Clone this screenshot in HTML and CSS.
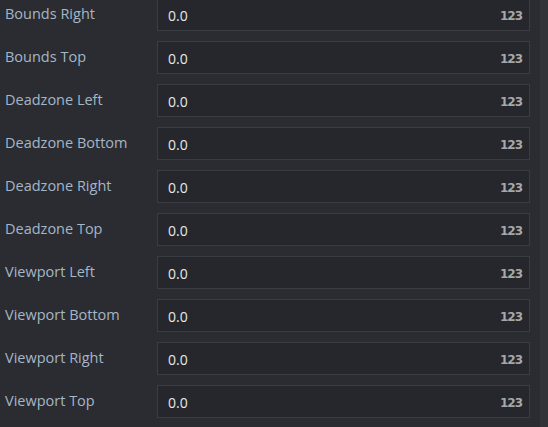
FILE: index.html
```html
<!DOCTYPE html>
<html lang="en">
<head>
  <meta charset="UTF-8">
  <title>Camera Properties</title>
  <link rel="stylesheet" href="styles.css">
</head>
<body>
  <div class="panel">
    <div class="props">
      <div class="prop">
        <label class="prop-label">Bounds Right</label>
        <div class="prop-field"><span class="prop-value">0.0</span><span class="prop-type">123</span></div>
      </div>
      <div class="prop">
        <label class="prop-label">Bounds Top</label>
        <div class="prop-field"><span class="prop-value">0.0</span><span class="prop-type">123</span></div>
      </div>
      <div class="prop">
        <label class="prop-label">Deadzone Left</label>
        <div class="prop-field"><span class="prop-value">0.0</span><span class="prop-type">123</span></div>
      </div>
      <div class="prop">
        <label class="prop-label">Deadzone Bottom</label>
        <div class="prop-field"><span class="prop-value">0.0</span><span class="prop-type">123</span></div>
      </div>
      <div class="prop">
        <label class="prop-label">Deadzone Right</label>
        <div class="prop-field"><span class="prop-value">0.0</span><span class="prop-type">123</span></div>
      </div>
      <div class="prop">
        <label class="prop-label">Deadzone Top</label>
        <div class="prop-field"><span class="prop-value">0.0</span><span class="prop-type">123</span></div>
      </div>
      <div class="prop">
        <label class="prop-label">Viewport Left</label>
        <div class="prop-field"><span class="prop-value">0.0</span><span class="prop-type">123</span></div>
      </div>
      <div class="prop">
        <label class="prop-label">Viewport Bottom</label>
        <div class="prop-field"><span class="prop-value">0.0</span><span class="prop-type">123</span></div>
      </div>
      <div class="prop">
        <label class="prop-label">Viewport Right</label>
        <div class="prop-field"><span class="prop-value">0.0</span><span class="prop-type">123</span></div>
      </div>
      <div class="prop">
        <label class="prop-label">Viewport Top</label>
        <div class="prop-field"><span class="prop-value">0.0</span><span class="prop-type">123</span></div>
      </div>
    </div>
    <div class="scrollbar"></div>
  </div>
</body>
</html>
```

FILE: styles.css
```css
body {
  margin: 0;
  background-color: #2a2c31;
  font-family: 'Open Sans', 'Noto Sans', sans-serif;
  overflow: hidden;
}

.panel {
  display: flex;
  height: 427px;
}

.props {
  flex: 1;
  display: flex;
  flex-direction: column;
  gap: 10px;
  margin-top: -2px;
  padding-right: 10px;
}

.prop {
  display: flex;
  align-items: center;
  height: 33px;
}

.prop-label {
  width: 152px;
  padding-left: 5px;
  margin-bottom: 2px;
  color: #a5b6c7;
  font-size: 14.5px;
}

.prop-field {
  flex: 1;
  height: 33px;
  box-sizing: border-box;
  display: flex;
  align-items: center;
  justify-content: space-between;
  padding: 2px 7px 0 10px;
  background-color: #25272c;
  border: 1px solid #3a3c41;
}

.prop-value {
  color: #e8e8e8;
  font-size: 14px;
}

.prop-type {
  color: #a8a8a8;
  font-family: 'DejaVu Sans', sans-serif;
  font-size: 12px;
  font-weight: bold;
  letter-spacing: -1px;
}

.scrollbar {
  width: 8px;
  background-color: #313339;
}
```
